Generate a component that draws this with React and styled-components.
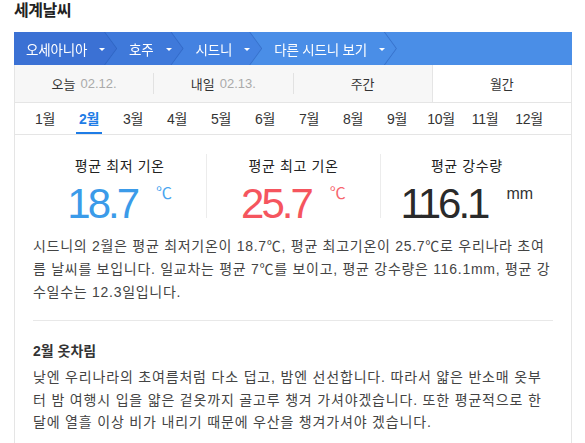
import React from 'react';
import styled, { createGlobalStyle } from 'styled-components';

const GlobalStyle = createGlobalStyle`
  html, body {
    margin: 0;
    padding: 0;
    background: #fff;
  }
  body {
    font-family: "Liberation Sans", "Noto Sans CJK KR", sans-serif;
    color: #333;
  }
`;

const Page = styled.div`
  width: 558px;
  padding-left: 14px;
`;

const Title = styled.h2`
  margin: 0 0 11px;
  font-size: 16px;
  line-height: 21px;
  font-weight: bold;
  color: #222;
  letter-spacing: -0.5px;
`;

const Bar = styled.nav`
  display: flex;
  height: 33px;
  background: #4a8ee7;
`;

const Crumb = styled.div`
  position: relative;
  z-index: ${p => p.$z};
  margin-left: ${p => (p.$first ? 0 : -12)}px;
  filter: drop-shadow(1px 0 0 rgba(25, 70, 160, 0.4));
`;

const CrumbFace = styled.div`
  height: 33px;
  display: flex;
  align-items: center;
  gap: 12px;
  padding: 0 11px 0 ${p => (p.$first ? 12 : 25)}px;
  background: ${p => p.$bg};
  clip-path: polygon(0 0, calc(100% - 12px) 0, 100% 50%, calc(100% - 12px) 100%, 0 100%);
  color: #fff;
  font-size: 13.5px;
  letter-spacing: -0.2px;
`;

const Caret = styled.span`
  width: 0;
  height: 0;
  margin-top: 1px;
  border-left: 3px solid transparent;
  border-right: 3px solid transparent;
  border-top: 3px solid #fff;
`;

const Card = styled.div`
  border-left: 1px solid #e5e5e5;
  border-right: 1px solid #e5e5e5;
`;

const Tabs = styled.div`
  display: flex;
  height: 37px;
  background: #f7f7f7;
  border-bottom: 1px solid #e5e5e5;
`;

const Tab = styled.div`
  flex: 1;
  display: flex;
  align-items: center;
  justify-content: center;
  gap: 5px;
  font-size: 13px;
  color: #333;
  background: ${p => (p.$active ? '#fff' : 'transparent')};
  border-left: ${p => (p.$active ? '1px solid #e5e5e5' : 'none')};
`;

const TabDate = styled.span`
  color: #aaa;
  font-size: 13px;
`;

const TabDivider = styled.span`
  width: 1px;
  height: 21px;
  align-self: center;
  background: #e2e2e2;
`;

const Months = styled.div`
  display: flex;
  height: 31px;
  padding-left: 8px;
  border-bottom: 1px solid #e5e5e5;
`;

const Month = styled.div`
  width: 44px;
  display: flex;
  justify-content: center;
`;

const MonthLabel = styled.span`
  display: flex;
  align-items: center;
  padding: 1px 3px 0;
  font-size: 14px;
  letter-spacing: -0.3px;
  color: ${p => (p.$active ? '#1e7ce6' : '#333')};
  font-weight: ${p => (p.$active ? 'bold' : 'normal')};
  border-bottom: 2px solid ${p => (p.$active ? '#1e7ce6' : 'transparent')};
`;

const Content = styled.div`
  padding: 19px 18px 20px;
`;

const Stats = styled.div`
  display: grid;
  grid-template-columns: repeat(3, 1fr);
`;

const Stat = styled.div`
  height: 64px;
  display: flex;
  flex-direction: column;
  align-items: center;
  border-left: ${p => (p.$first ? 'none' : '1px solid #ececec')};
`;

const StatLabel = styled.div`
  margin-top: 2px;
  font-size: 14px;
  line-height: 20px;
  font-weight: normal;
  color: #222;
  letter-spacing: 0.6px;
`;

const StatValue = styled.div`
  display: flex;
  align-items: flex-start;
  margin-top: 10px;
`;

const Number = styled.span`
  font-size: 42px;
  line-height: 36px;
  letter-spacing: -3px;
  color: ${p => p.$color};
`;

const Unit = styled.span`
  margin-left: 19px;
  font-size: 16px;
  line-height: 16px;
  color: ${p => p.$color};
`;

const Text = styled.p`
  margin: 17px 0 0;
  font-size: 14px;
  line-height: 23px;
  letter-spacing: ${p => p.$spacing || 0.72}px;
  word-break: break-all;
  color: #444;
`;

const Rule = styled.hr`
  margin: 16px 0 0;
  border: 0;
  border-top: 1px solid #e8e8e8;
`;

const SubTitle = styled.h3`
  margin: 19px 0 0;
  font-size: 14px;
  line-height: 22px;
  font-weight: bold;
  color: #333;
`;

const Text2 = styled(Text)`
  margin-top: 4px;
  line-height: 22.5px;
`;

const crumbs = [
  { label: '오세아니아', bg: '#3b71d4' },
  { label: '호주', bg: '#3f79da' },
  { label: '시드니', bg: '#4482e1' },
  { label: '다른 시드니 보기', bg: '#4a8ee7' },
];

const months = Array.from({ length: 12 }, (_, i) => `${i + 1}월`);

const stats = [
  { label: '평균 최저 기온', value: '18.7', unit: '℃', color: '#3b9be9', unitColor: '#4aa5ef' },
  { label: '평균 최고 기온', value: '25.7', unit: '℃', color: '#f5555e', unitColor: '#f7666e' },
  { label: '평균 강수량', value: '116.1', unit: 'mm', color: '#2a2a2a', unitColor: '#333' },
];

export default function App() {
  return (
    <Page>
      <GlobalStyle />
      <Title>세계날씨</Title>
      <Bar>
        {crumbs.map((c, i) => (
          <Crumb key={c.label} $first={i === 0} $z={crumbs.length - i}>
            <CrumbFace $first={i === 0} $bg={c.bg}>
              {c.label}
              <Caret />
            </CrumbFace>
          </Crumb>
        ))}
      </Bar>
      <Card>
        <Tabs>
          <Tab>오늘 <TabDate>02.12.</TabDate></Tab>
          <TabDivider />
          <Tab>내일 <TabDate>02.13.</TabDate></Tab>
          <TabDivider />
          <Tab>주간</Tab>
          <Tab $active>월간</Tab>
        </Tabs>
        <Months>
          {months.map((m, i) => (
            <Month key={m}>
              <MonthLabel $active={i === 1}>{m}</MonthLabel>
            </Month>
          ))}
        </Months>
        <Content>
          <Stats>
            {stats.map((s, i) => (
              <Stat key={s.label} $first={i === 0}>
                <StatLabel>{s.label}</StatLabel>
                <StatValue>
                  <Number $color={s.color}>{s.value}</Number>
                  <Unit $color={s.unitColor}>{s.unit}</Unit>
                </StatValue>
              </Stat>
            ))}
          </Stats>
          <Text>
            시드니의 2월은 평균 최저기온이 18.7℃, 평균 최고기온이 25.7℃로 우리나라 초여름 날씨를 보입니다. 일교차는 평균 7℃를 보이고, 평균 강수량은 116.1mm, 평균 강수일수는 12.3일입니다.
          </Text>
          <Rule />
          <SubTitle>2월 옷차림</SubTitle>
          <Text2 $spacing={0.82}>
            낮엔 우리나라의 초여름처럼 다소 덥고, 밤엔 선선합니다. 따라서 얇은 반소매 옷부터 밤 여행시 입을 얇은 겉옷까지 골고루 챙겨 가셔야겠습니다. 또한 평균적으로 한 달에 열흘 이상 비가 내리기 때문에 우산을 챙겨가셔야 겠습니다.
          </Text2>
        </Content>
      </Card>
    </Page>
  );
}
